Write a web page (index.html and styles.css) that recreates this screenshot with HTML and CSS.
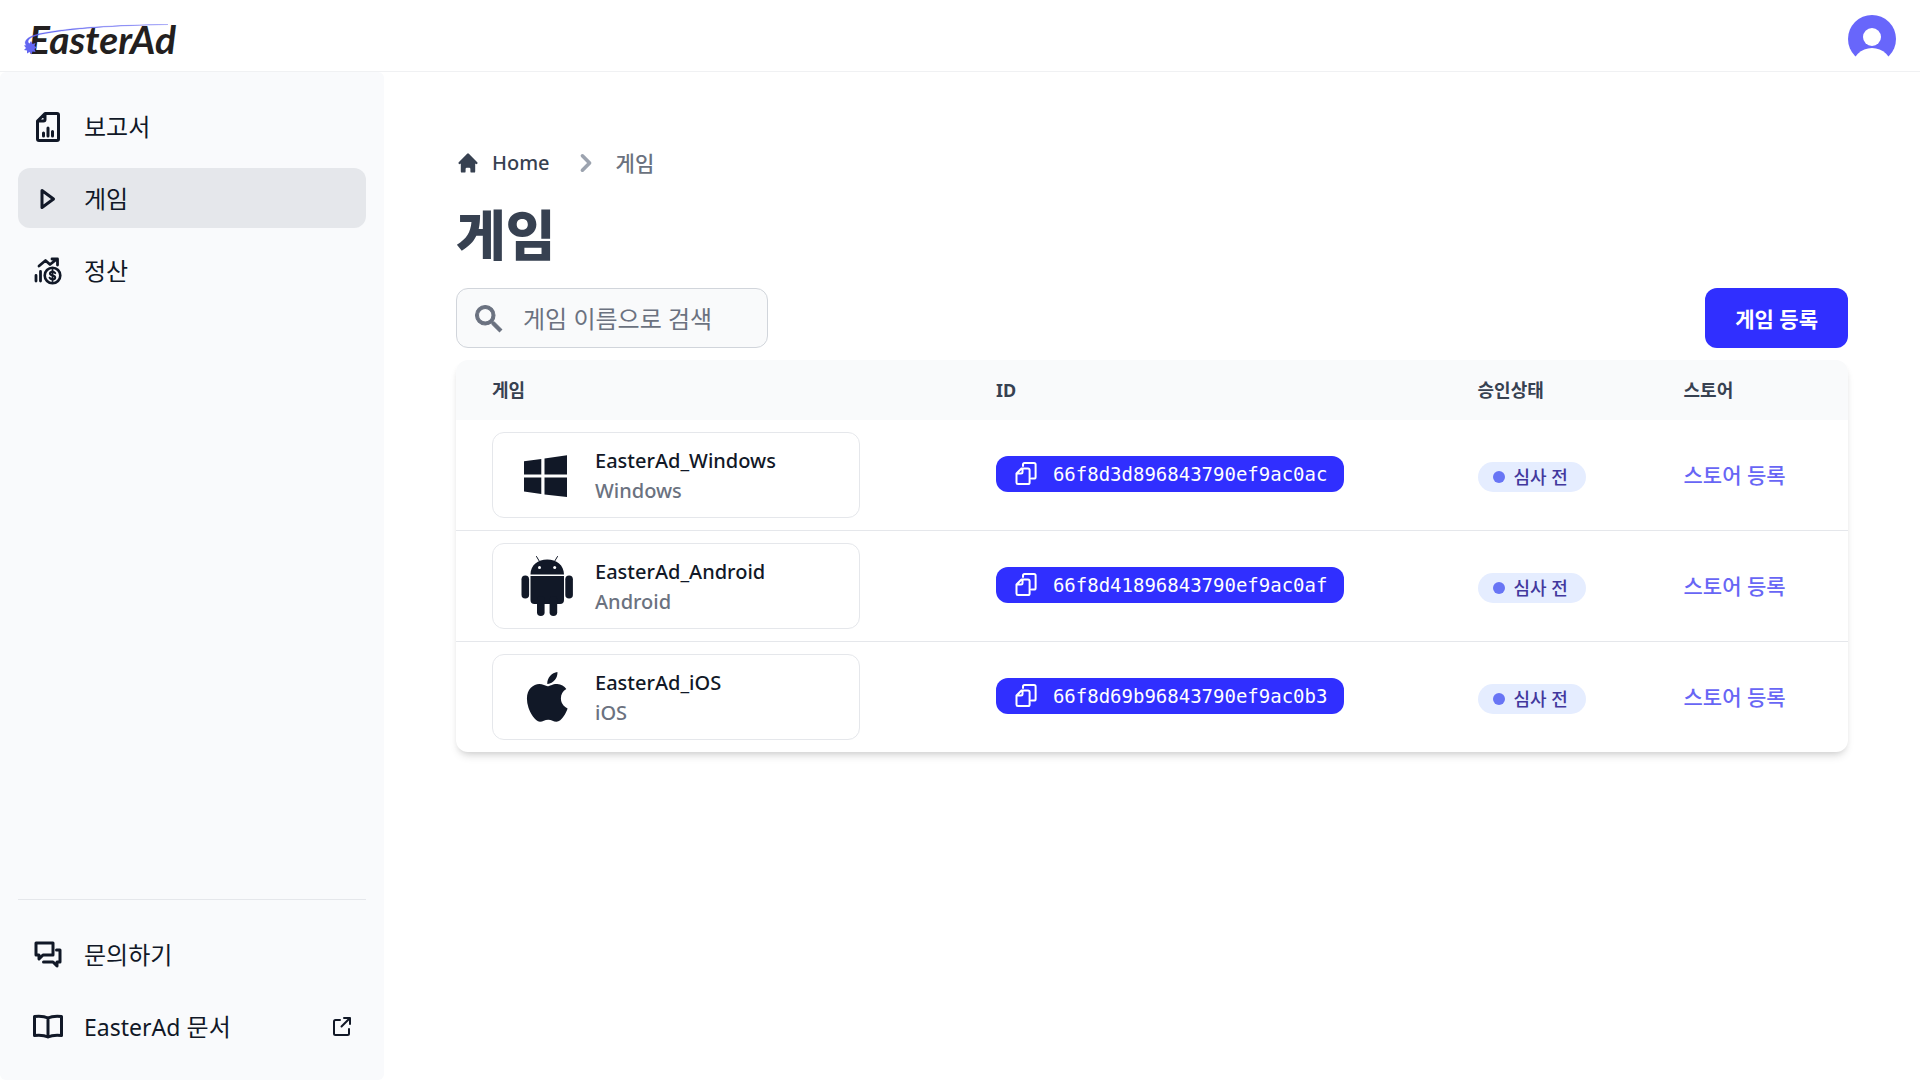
FILE: index.html
```html
<!DOCTYPE html>
<html lang="ko">
<head>
<meta charset="utf-8">
<meta name="viewport" content="width=device-width, initial-scale=1">
<title>EasterAd - 게임</title>
<link rel="stylesheet" href="styles.css">
</head>
<body>
<svg class="sprite" aria-hidden="true">
  <symbol id="copy" viewBox="0 0 24 24">
    <path d="M9 4V2.600A1.600 1.600 0 0 1 10.600 1H20a1.600 1.600 0 0 1 1.600 1.600V15A1.600 1.600 0 0 1 20 16.600h-2.500M2.500 11.500 7.500 6.500H14a1.600 1.600 0 0 1 1.600 1.600V20.500a1.600 1.600 0 0 1-1.600 1.600H4.100A1.600 1.600 0 0 1 2.500 20.500ZM8.500 6.500V10a1.500 1.500 0 0 1-1.500 1.500H2.500" fill="none" stroke="currentColor" stroke-width="2" stroke-linecap="round" stroke-linejoin="round"/>
  </symbol>
</svg>
<header class="topbar">
  <a class="logo" href="#">
    <span class="logo-text">EasterAd</span>
    <svg class="logo-orbit" viewBox="0 0 160 40" aria-hidden="true">
      <path d="M9 25C2 22 4 15 20 11.500 50 5.500 95 3 148 2.500 95 3.500 50 6.500 20 12.500 8 15.500 6 19 10 23Z" fill="#6366f1" stroke="#6366f1" stroke-width=".3"/>
      <path d="m11 19 1.500 3 3-1-1 3 2.500 1.500-2.500 1.500 1 3-3-.5-1 3-2-2.500-2.500 1.500v-3l-3-.5 2-2-2-2.500 3-.5v-3l2.500 1.500Z" fill="#6366f1"/>
    </svg>
  </a>
  <button class="avatar" type="button" aria-label="계정">
    <svg viewBox="0 0 48 48" aria-hidden="true"><circle cx="24" cy="24" r="24" fill="#6866fb"/><circle cx="24" cy="22" r="9" fill="#fff"/><circle cx="24" cy="53" r="20" fill="#fff"/></svg>
  </button>
</header>
<div class="shell">
  <nav class="sidebar" aria-label="메뉴">
    <div class="nav-group">
      <a class="nav-item" href="#">
        <svg class="icon" viewBox="0 0 36 36" aria-hidden="true"><path d="M15 4.500h12a1.500 1.500 0 0 1 1.500 1.500v24a1.500 1.500 0 0 1-1.500 1.500H9A1.500 1.500 0 0 1 7.500 30V12ZM15 5v5.500a1.500 1.500 0 0 1-1.500 1.500H8M13.500 24v3M18 19v8M22.500 22.500V27"/></svg>
        <span>보고서</span>
      </a>
      <a class="nav-item active" href="#" aria-current="page">
        <svg class="icon" viewBox="0 0 36 36" aria-hidden="true"><path d="M12 9.500 23.500 18 12 26.500Z"/></svg>
        <span>게임</span>
      </a>
      <a class="nav-item" href="#">
        <svg class="icon" viewBox="0 0 36 36" aria-hidden="true"><path d="M9 13 15.500 7.500 20 11.500 27 6M22 6h5.500v6M6 22.500V28M10.500 18.500V28" stroke-width="2.800"/><circle cx="22.500" cy="22.500" r="7.800" stroke-width="2.600"/><path d="M25.200 20.200c-.5-1.100-1.500-1.500-2.700-1.500-1.500 0-2.600.7-2.600 1.900 0 2.600 5.300 1.200 5.300 3.800 0 1.200-1.100 1.900-2.700 1.900-1.400 0-2.500-.5-2.900-1.600M22.500 17v11" stroke-width="2"/></svg>
        <span>정산</span>
      </a>
    </div>
    <div class="nav-group nav-footer">
      <a class="nav-item" href="#">
        <svg class="icon" viewBox="0 0 36 36" aria-hidden="true"><path d="M6 6h17v12H13l-4 4v-4H6ZM26.500 13H30v12h-3v4l-4-4H13.500"/></svg>
        <span>문의하기</span>
      </a>
      <a class="nav-item" href="#">
        <svg class="icon" viewBox="0 0 36 36" aria-hidden="true"><path d="M18 9C15 7.500 10 7 4.500 7.500v19C10 26 15 26.500 18 28c3-1.500 8-2 13.500-1.500v-19C26 7 21 7.500 18 9ZV28"/></svg>
        <span class="grow"><span class="latin">EasterAd</span> 문서</span>
        <svg class="icon external" viewBox="0 0 24 24" aria-hidden="true"><path d="M10 5H5.500A1.500 1.500 0 0 0 4 6.500v12A1.500 1.500 0 0 0 5.500 20h12a1.500 1.500 0 0 0 1.500-1.500V14M14 3h6v6M20 3l-8.500 8.500"/></svg>
      </a>
    </div>
  </nav>
  <main class="content">
    <nav aria-label="경로">
      <ol class="breadcrumb">
        <li><a class="crumb-home" href="#"><svg class="home" viewBox="0 0 20 20" aria-hidden="true"><path fill="currentColor" d="M10.707 2.293a1 1 0 0 0-1.414 0l-7 7a1 1 0 0 0 1.414 1.414L4 10.414V17a1 1 0 0 0 1 1h2a1 1 0 0 0 1-1v-2a1 1 0 0 1 1-1h2a1 1 0 0 1 1 1v2a1 1 0 0 0 1 1h2a1 1 0 0 0 1-1v-6.586l.293.293a1 1 0 0 0 1.414-1.414l-7-7Z"/></svg>Home</a></li>
        <li class="crumb"><svg class="chevron" viewBox="0 0 20 20" aria-hidden="true"><path fill="currentColor" fill-rule="evenodd" d="M7.293 14.707a1 1 0 0 1 0-1.414L10.586 10 7.293 6.707a1 1 0 0 1 1.414-1.414l4 4a1 1 0 0 1 0 1.414l-4 4a1 1 0 0 1-1.414 0Z"/></svg>게임</li>
      </ol>
    </nav>
    <h1>게임</h1>
    <div class="toolbar">
      <label class="search">
        <svg viewBox="0 0 24 24" aria-hidden="true"><path fill="currentColor" stroke="currentColor" stroke-width=".7" d="M15.500 14h-.79l-.28-.27A6.470 6.470 0 0 0 16 9.500 6.500 6.500 0 1 0 9.500 16c1.610 0 3.090-.59 4.230-1.570l.27.28v.79l5 4.990L20.490 19l-4.990-5Zm-6 0C7.010 14 5 11.990 5 9.500S7.010 5 9.500 5 14 7.010 14 9.500 11.990 14 9.500 14Z"/></svg>
        <input type="search" placeholder="게임 이름으로 검색" aria-label="게임 이름으로 검색">
      </label>
      <button class="primary" type="button">게임 등록</button>
    </div>
    <table class="games">
      <thead>
        <tr><th class="col-game" scope="col">게임</th><th class="col-id" scope="col">ID</th><th class="col-status" scope="col">승인상태</th><th class="col-store" scope="col">스토어</th></tr>
      </thead>
      <tbody>
        <tr>
          <td><a class="game" href="#">
            <svg viewBox="0 0 60 60" aria-hidden="true"><path fill="currentColor" d="M7 16.300 24.300 13.900V29.600H7ZM27.500 13.500 50 10.300V29.600H27.500ZM7 32.400H24.300V49L7 46.500ZM27.500 32.400H50V52L27.500 49.400Z"/></svg>
            <span class="game-text"><span>EasterAd_Windows</span><span class="platform">Windows</span></span></a></td>
          <td><button class="id" type="button"><svg aria-hidden="true"><use href="#copy"/></svg><code>66f8d3d896843790ef9ac0ac</code></button></td>
          <td><span class="status">심사 전</span></td>
          <td><a class="store" href="#">스토어 등록</a></td>
        </tr>
        <tr>
          <td><a class="game" href="#">
            <svg viewBox="0 0 60 60" aria-hidden="true"><g fill="currentColor"><path d="M13.500 18.500C13.500 9 21 3.500 30.200 3.500S47 9 47 18.500ZM13.500 20H47V44a4 4 0 0 1-4 4H17.500a4 4 0 0 1-4-4Z"/><rect x="4.500" y="19.500" width="7.600" height="23" rx="3.800"/><rect x="48.300" y="19.500" width="7.600" height="23" rx="3.800"/><rect x="20" y="40" width="7.600" height="20" rx="3.800"/><rect x="32.600" y="40" width="7.600" height="20" rx="3.800"/></g><path d="M19.500.5 22.500 5.500M40.500.5 37.500 5.500" stroke="currentColor" stroke-linecap="round"/><circle cx="22.500" cy="11.500" r="1.500" fill="#fff"/><circle cx="37.700" cy="11.500" r="1.500" fill="#fff"/></svg>
            <span class="game-text"><span>EasterAd_Android</span><span class="platform">Android</span></span></a></td>
          <td><button class="id" type="button"><svg aria-hidden="true"><use href="#copy"/></svg><code>66f8d41896843790ef9ac0af</code></button></td>
          <td><span class="status">심사 전</span></td>
          <td><a class="store" href="#">스토어 등록</a></td>
        </tr>
        <tr>
          <td><a class="game" href="#">
            <svg viewBox="0 0 60 60" aria-hidden="true"><path fill="currentColor" transform="translate(9.500 1.500) scale(.108 .111)" d="M318.700 268.700c-.2-36.700 16.400-64.400 50-84.800-18.800-26.900-47.200-41.700-84.700-44.600-35.500-2.800-74.300 20.700-88.500 20.700-15 0-49.400-19.700-76.400-19.700C63.300 141.200 4 184.800 4 273.500q0 39.300 14.400 81.200c12.800 36.700 59 126.700 107.200 125.200 25.200-.6 43-17.900 75.800-17.900 31.800 0 48.300 17.900 76.400 17.900 48.600-.7 90.400-82.500 102.600-119.300-65.200-30.700-61.700-90-61.700-91.900zm-56.600-164.200c27.300-32.400 24.800-61.900 24-72.500-24.100 1.400-52 16.400-67.900 34.900-17.500 19.800-27.800 44.300-25.600 71.900 26.100 2 49.900-11.400 69.500-34.300z"/></svg>
            <span class="game-text"><span>EasterAd_iOS</span><span class="platform">iOS</span></span></a></td>
          <td><button class="id" type="button"><svg aria-hidden="true"><use href="#copy"/></svg><code>66f8d69b96843790ef9ac0b3</code></button></td>
          <td><span class="status">심사 전</span></td>
          <td><a class="store" href="#">스토어 등록</a></td>
        </tr>
      </tbody>
    </table>
  </main>
</div>
</body>
</html>
```

FILE: styles.css
```css
*, *::before, *::after { box-sizing: border-box; }

body {
  margin: 0;
  min-height: 100vh;
  display: flex;
  flex-direction: column;
  background: #fff;
  color: #111827;
  font-family: "Noto Sans", "Noto Sans CJK KR", sans-serif;
  font-size: 21px;
  line-height: 30px;
}

a { color: inherit; text-decoration: none; }
button, input { font: inherit; color: inherit; border: 0; margin: 0; padding: 0; background: none; }
button { cursor: pointer; }
svg { display: block; flex: none; }
.sprite { display: none; }

.topbar {
  display: flex;
  align-items: center;
  justify-content: space-between;
  height: 72px;
  padding: 6px 24px 0;
  border-bottom: 1px solid #f0f1f3;
}

.logo { position: relative; padding-left: 5px; }
.logo-text {
  font-family: Lato, sans-serif;
  font-size: 39px;
  font-style: italic;
  font-weight: 700;
  line-height: 48px;
  color: #231f20;
}
.logo-orbit { position: absolute; left: -4px; top: 7px; width: 160px; height: 40px; }
.avatar svg { width: 48px; height: 48px; }

.shell { flex: 1; display: flex; }

.sidebar {
  flex: 0 0 384px;
  display: flex;
  flex-direction: column;
  justify-content: space-between;
  padding: 24px 18px;
  border-radius: 6px;
  background: #f9fafc;
}
.nav-group { display: flex; flex-direction: column; gap: 12px; }
.nav-footer { padding-top: 24px; border-top: 1px solid #e5e7eb; }
.nav-item {
  display: flex;
  align-items: center;
  gap: 18px;
  padding: 13px 12px 11px;
  border-radius: 12px;
  font-size: 24px;
  line-height: 36px;
}
.nav-item.active { background: #e5e7eb; }
.grow { flex: 1; }
.latin { font-size: 23px; }
.icon {
  width: 36px;
  height: 36px;
  fill: none;
  stroke: currentColor;
  stroke-width: 3;
  stroke-linecap: round;
  stroke-linejoin: round;
}
.icon.external { width: 24px; height: 24px; stroke-width: 2; }

.content { flex: 1; min-width: 0; padding: 72px; }

.breadcrumb {
  display: flex;
  align-items: center;
  gap: 18px;
  margin: 0;
  padding: 2px 0 0;
  height: 36px;
  list-style: none;
  font-weight: 500;
  color: #6b7280;
}
.crumb-home, .crumb { display: flex; align-items: center; gap: 12px; }
.crumb-home { color: #374151; font-size: 20px; }
.home { width: 24px; height: 24px; }
.chevron { width: 36px; height: 36px; color: #9ca3af; }

h1 {
  margin: 25px 0 23px;
  font-size: 54px;
  line-height: 60px;
  font-weight: 800;
  color: #374151;
}

.toolbar { display: flex; justify-content: space-between; margin-bottom: 12px; }
.search {
  display: flex;
  align-items: center;
  gap: 16px;
  width: 312px;
  height: 60px;
  padding: 1px 14px 0;
  border: 1px solid #d1d5db;
  border-radius: 12px;
  background: #f9fafb;
  color: #6b7280;
}
.search svg { width: 36px; height: 36px; }
.search input { flex: 1; min-width: 0; font-size: 24px; line-height: 36px; outline: 0; }
.search input::placeholder { color: #6b7280; opacity: 1; }
.primary {
  padding: 1px 30px 0;
  height: 60px;
  border-radius: 12px;
  background: #302fff;
  color: #fff;
  font-weight: 600;
}

.games {
  width: 100%;
  table-layout: fixed;
  border-collapse: separate;
  border-spacing: 0;
  border-radius: 12px;
  overflow: hidden;
  box-shadow: 0 6px 9px -2px rgb(0 0 0 / 12%), 0 3px 6px -3px rgb(0 0 0 / 12%);
}
.games th {
  height: 60px;
  padding: 0 0 0 36px;
  background: #f9fafb;
  color: #374151;
  font-size: 18px;
  line-height: 24px;
  font-weight: 700;
  text-align: left;
}
.games td { padding: 12px 0 12px 36px; border-bottom: 1px solid #e5e7eb; }
.games tr:last-child td { border-bottom: 0; }
.col-game { width: 36.2%; }
.col-id { width: 34.6%; }
.col-status { width: 14.8%; }

.game {
  display: flex;
  align-items: center;
  gap: 18px;
  width: 368px;
  height: 86px;
  padding: 0 24px;
  border: 1px solid #e5e7eb;
  border-radius: 12px;
  font-size: 20px;
  font-weight: 500;
}
.game svg { width: 60px; height: 60px; }
.game-text { display: flex; flex-direction: column; padding-top: 2px; }
.platform { color: #6b7280; }

.id {
  display: flex;
  align-items: center;
  gap: 15px;
  height: 36px;
  margin-bottom: 2px;
  padding: 0 17px 0 18px;
  border-radius: 12px;
  background: #302fff;
  color: #fff;
}
.id svg { width: 24px; height: 24px; }
.id code { font-family: "DejaVu Sans Mono", monospace; font-size: 19px; line-height: 24px; }

.status {
  display: inline-flex;
  align-items: center;
  gap: 9px;
  height: 30px;
  margin-top: 2px;
  padding: 0 18px 0 15px;
  border-radius: 15px;
  background: #e5edff;
  color: #42389d;
  font-size: 18px;
  font-weight: 500;
  vertical-align: middle;
}
.status::before { content: ""; width: 12px; height: 12px; border-radius: 50%; background: #6875f5; }
.store { color: #6866f5; font-weight: 500; }
```
